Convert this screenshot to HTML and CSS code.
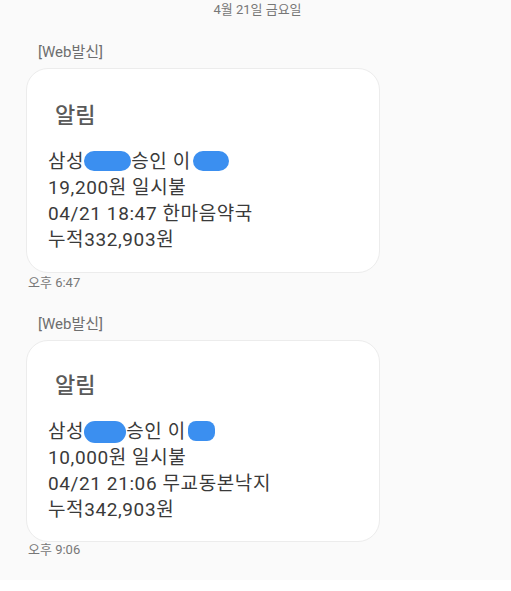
FILE: index.html
```html
<!DOCTYPE html>
<html lang="ko">
<head>
<meta charset="utf-8">
<link rel="stylesheet" href="styles.css">
</head>
<body>
<div class="screen">
  <div class="date">4월 21일 금요일</div>

  <div class="msg">
    <div class="label">[Web발신]</div>
    <div class="bubble">
      <div class="title">알림</div>
      <div class="body">
        <div>삼성<span class="blob b1"></span>승인 이<span class="blob b2"></span></div>
        <div>19,200원 일시불</div>
        <div>04/21 18:47 한마음약국</div>
        <div>누적332,903원</div>
      </div>
    </div>
    <div class="time">오후 6:47</div>
  </div>

  <div class="msg second">
    <div class="label">[Web발신]</div>
    <div class="bubble">
      <div class="title">알림</div>
      <div class="body">
        <div>삼성<span class="blob b3"></span>승인 이<span class="blob b4"></span></div>
        <div>10,000원 일시불</div>
        <div>04/21 21:06 무교동본낙지</div>
        <div>누적342,903원</div>
      </div>
    </div>
    <div class="time">오후 9:06</div>
  </div>
</div>
</body>
</html>
```

FILE: styles.css
```css
html, body {
  margin: 0;
  padding: 0;
  background: #ffffff;
}
body {
  font-family: Roboto, "Noto Sans CJK KR", "Noto Sans", sans-serif;
  width: 511px;
  height: 591px;
  overflow: hidden;
}
.screen {
  background: #fafafa;
  height: 580px;
  box-sizing: border-box;
  display: flex;
  flex-direction: column;
}
.date {
  text-align: center;
  font-size: 13px;
  line-height: 20px;
  color: #777;
  padding-left: 4px;
}
.msg {
  margin-top: 23px;
  display: flex;
  flex-direction: column;
}
.msg.second {
  margin-top: 24px;
}
.label {
  margin-left: 38px;
  font-size: 15px;
  line-height: 18px;
  color: #6e6e6e;
}
.bubble {
  margin-top: 7px;
  margin-left: 26px;
  width: 354px;
  box-sizing: border-box;
  background: #ffffff;
  border: 1px solid #ececec;
  border-radius: 22px;
  padding: 32px 0 19px 21px;
}
.second .bubble {
  padding-top: 30px;
  padding-bottom: 18px;
}
.title {
  margin-left: 7px;
  font-size: 22px;
  line-height: 30px;
  font-weight: 500;
  color: #5a5a5a;
}
.body {
  margin-top: 18px;
  font-size: 19px;
  line-height: 26px;
  letter-spacing: 0.6px;
  color: #3a3a3a;
}
.blob {
  display: inline-block;
  height: 20px;
  background: #3b8ff0;
  border-radius: 10px;
  vertical-align: -3px;
}
.b1 { width: 47px; }
.b2 { width: 36px; margin-left: 2px; }
.b3 { width: 42px; height: 22px; border-radius: 11px; vertical-align: -5px; }
.b4 { width: 27px; margin-left: 2px; border-radius: 8px; }
.time {
  margin-top: 2px;
  margin-left: 28px;
  font-size: 13px;
  line-height: 16px;
  color: #777;
}
.second .time {
  margin-top: 0;
}
```
